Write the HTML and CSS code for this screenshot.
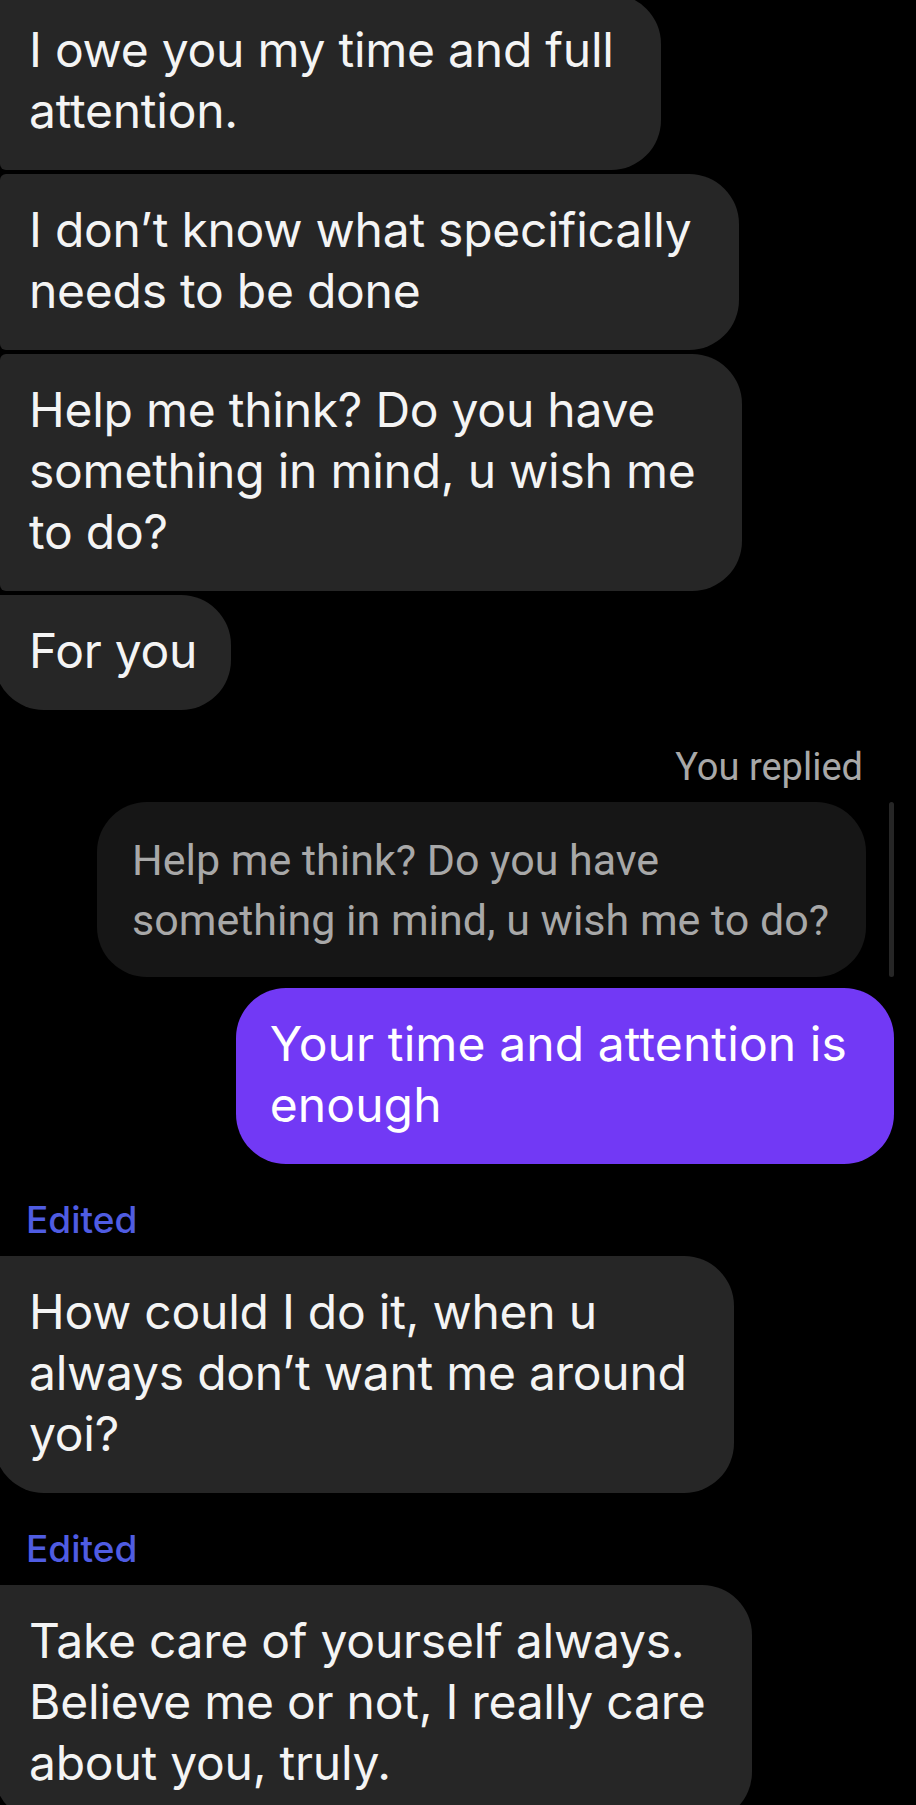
FILE: index.html
```html
<!DOCTYPE html>
<html lang="en">

<head>
    <meta charset="UTF-8">
    <meta name="viewport" content="width=device-width, initial-scale=1.0">
    <title>Chat</title>
    <link rel="stylesheet" href="styles.css">
</head>

<body>

    <div class="chat">

        <div class="group">
            <div class="msg">I owe you my time and full<br>attention.</div>
            <div class="msg">I don’t know what specifically<br>needs to be done</div>
            <div class="msg">Help me think? Do you have<br>something in mind, u wish me<br>to do?</div>
            <div class="msg last single">For you</div>
        </div>

        <div class="mine">
            <div class="label">You replied</div>
            <div class="reply">
                <div class="quote">Help me think? Do you have<br>something in mind, u wish me to do?</div>
                <div class="bar"></div>
            </div>
            <div class="msg sent">Your time and attention is<br>enough</div>
        </div>

        <div class="group">
            <div class="edited">Edited</div>
            <div class="msg last">How could I do it, when u<br>always don’t want me around<br>yoi?</div>
        </div>

        <div class="group">
            <div class="edited">Edited</div>
            <div class="msg last">Take care of yourself always.<br>Believe me or not, I really care<br>about you, truly.</div>
        </div>

    </div>

</body>

</html>
```

FILE: styles.css
```css
* {
    box-sizing: border-box;
}

html,
body {
    margin: 0;
    background-color: #000;
}

.chat {
    display: flex;
    flex-direction: column;
    margin-top: -6px;
}

.group {
    display: flex;
    flex-direction: column;
    align-items: flex-start;
    gap: 4px;
}

.msg {
    font-family: "Inter", "Roboto", sans-serif;
    font-size: 48px;
    letter-spacing: -0.25px;
    line-height: 61px;
    color: #f4f4f4;
    background-color: #262626;
    padding: 25px 47px 29px 29px;
    border-radius: 6px 50px 50px 6px;
}

.msg.last {
    border-radius: 6px 50px 50px 50px;
    margin-left: -6px;
    padding-left: 35px;
}

.msg.single {
    padding-right: 34px;
}

.mine {
    display: flex;
    flex-direction: column;
    align-items: flex-end;
    padding-right: 22px;
    margin-top: 37px;
}

.label {
    font-family: "Roboto", sans-serif;
    font-size: 38px;
    line-height: 40px;
    color: #a8a8a8;
    margin-right: 31px;
    margin-bottom: 15px;
}

.reply {
    display: flex;
    gap: 23px;
}

.quote {
    font-family: "Roboto", sans-serif;
    font-size: 43px;
    line-height: 60px;
    color: #a8a8a8;
    background-color: #161616;
    padding: 28px 37px 27px 35px;
    border-radius: 50px;
}

.bar {
    width: 5px;
    border-radius: 3px;
    background-color: #262626;
}

.msg.sent {
    margin-top: 11px;
    background-color: #7239f5;
    color: #fff;
    padding-left: 34px;
    letter-spacing: 0.1px;
    border-radius: 50px;
}

.edited {
    font-family: "Inter", "Roboto", sans-serif;
    font-weight: 500;
    font-size: 37px;
    line-height: 40px;
    color: #4f5ce2;
    margin: 36px 0 12px 26px;
}
```
